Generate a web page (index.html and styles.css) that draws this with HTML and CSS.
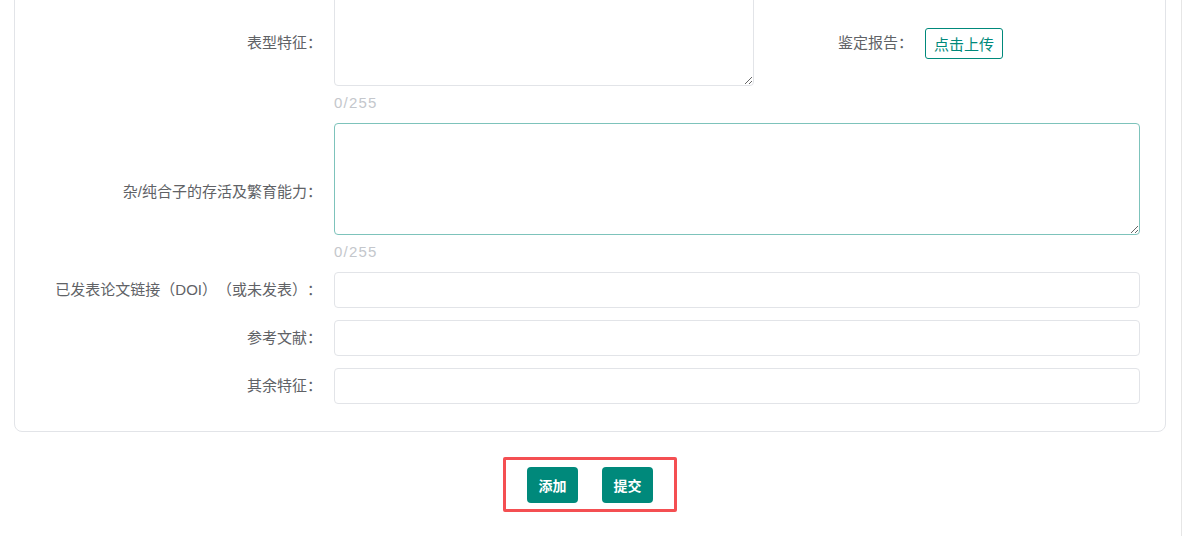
FILE: index.html
```html
<!DOCTYPE html>
<html lang="zh-CN">
<head>
    <meta charset="UTF-8">
    <meta name="viewport" content="width=device-width, initial-scale=1.0">
    <title>新增品种</title>
    <link rel="stylesheet" href="styles.css">
</head>
<body>

    <div class="page">
        <div class="main">
            <form class="form-card">
                <!-- 表型特征 + 鉴定报告 -->
                <div class="form-row">
                    <div class="form-item item-textarea item-half">
                        <label class="form-label">表型特征：</label>
                        <div class="form-content">
                            <textarea class="form-textarea"></textarea>
                            <div class="word-count">0/255</div>
                        </div>
                    </div>
                    <div class="form-item item-upload">
                        <label class="form-label">鉴定报告：</label>
                        <div class="form-content">
                            <button type="button" class="upload-btn">点击上传</button>
                        </div>
                    </div>
                </div>

                <div class="form-item item-textarea">
                    <label class="form-label">杂/纯合子的存活及繁育能力：</label>
                    <div class="form-content">
                        <textarea class="form-textarea is-active"></textarea>
                        <div class="word-count">0/255</div>
                    </div>
                </div>

                <div class="form-item">
                    <label class="form-label">已发表论文链接（DOI）（或未发表）：</label>
                    <div class="form-content">
                        <input type="text" class="form-input">
                    </div>
                </div>

                <div class="form-item">
                    <label class="form-label">参考文献：</label>
                    <div class="form-content">
                        <input type="text" class="form-input">
                    </div>
                </div>

                <div class="form-item">
                    <label class="form-label">其余特征：</label>
                    <div class="form-content">
                        <input type="text" class="form-input">
                    </div>
                </div>
            </form>

            <div class="actions">
                <div class="action-group">
                    <button type="button" class="btn-primary">添加</button>
                    <button type="button" class="btn-primary">提交</button>
                </div>
            </div>
        </div>

        <div class="scroll-track"></div>
    </div>

</body>
</html>
```

FILE: styles.css
```css
/* Reset default margin and padding */
* {
    margin: 0;
    padding: 0;
    box-sizing: border-box;
}

body {
    background: #fff;
    color: #606266;
    font-family: "Liberation Sans", "Noto Sans CJK SC", sans-serif;
    font-size: 15px;
    text-spacing-trim: space-all; /* keep full-width brackets wide */
    height: 100vh;
    overflow: hidden;
}

.page {
    display: flex;
    height: 100%;
}

.main {
    flex: 1;
    padding: 0 15px 0 14px;
}

/* thin strip on the right edge */
.scroll-track {
    width: 14px;
    border-left: 1px solid #e6e6e6;
}

.form-card {
    margin-top: -47px;
    padding: 20px 25px 15px 20px;
    border: 1px solid #e2e4e8;
    border-radius: 8px;
}

.form-row {
    display: flex;
}

.form-item {
    display: flex;
    align-items: center;
    margin-bottom: 12px;
}

.item-textarea {
    margin-bottom: 7px;
}

.item-textarea .form-label,
.item-upload .form-label {
    margin-bottom: 4px;
}

.item-half {
    width: 719px;
}

.item-upload {
    flex: 1;
    margin-bottom: 7px;
}

.item-upload .form-content {
    margin-bottom: 4px;
}

.form-label {
    width: 299px;
    flex-shrink: 0;
    padding-right: 12px;
    text-align: right;
    line-height: 36px;
    color: #606266;
    white-space: nowrap;
}

.item-upload .form-label {
    width: 171px;
}

.form-content {
    flex: 1;
}

.form-input {
    display: block;
    width: 100%;
    height: 36px;
    padding: 0 12px;
    border: 1px solid #e2e4e8;
    border-radius: 4px;
    font: inherit;
    color: #606266;
    outline: none;
}

.form-textarea {
    display: block;
    width: 100%;
    height: 112px;
    padding: 6px 12px;
    border: 1px solid #e2e4e8;
    border-radius: 4px;
    font: inherit;
    color: #606266;
    resize: vertical;
    outline: none;
}

.form-textarea.is-active {
    border-color: #7dc3bb; /* hovered field */
}

.word-count {
    margin-top: 4px;
    line-height: 26px;
    color: #c4c7cc;
    letter-spacing: 1.2px;
}

.upload-btn {
    height: 31px;
    padding: 0 8px;
    background: #fff;
    border: 1px solid #00897b;
    border-radius: 3px;
    color: #00897b;
    font: inherit;
    cursor: pointer;
}

.actions {
    display: flex;
    justify-content: center;
    margin-top: 25px;
}

.action-group {
    display: flex;
    gap: 24px;
    padding: 7px 21px 6px;
    border: 3px solid #f44f52;
    border-radius: 2px;
}

.btn-primary {
    width: 51px;
    height: 36px;
    background-color: #00897b;
    border: none;
    border-radius: 4px;
    color: #fff;
    font: inherit;
    font-size: 14px;
    font-weight: bold;
    cursor: pointer;
}
```
